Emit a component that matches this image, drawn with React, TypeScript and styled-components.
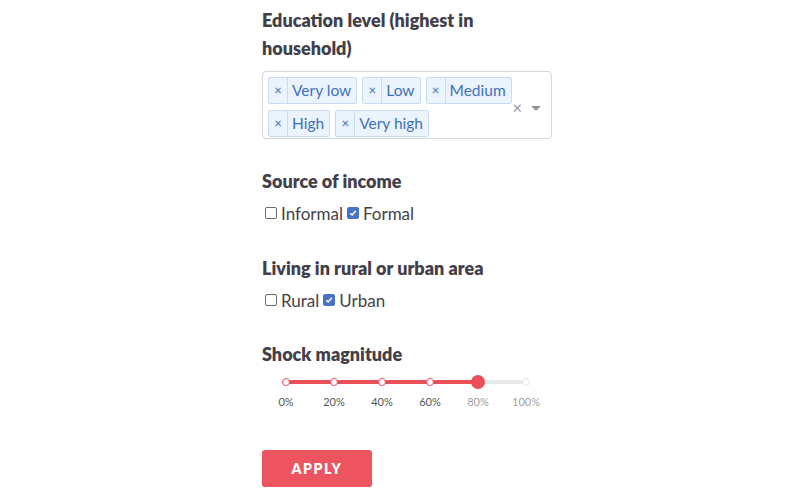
import React from "react";
import styled, { createGlobalStyle } from "styled-components";

const GlobalStyle = createGlobalStyle`
  html, body {
    margin: 0;
    padding: 0;
    background: #ffffff;
    font-family: "Lato", "Noto Sans", sans-serif;
    color: #3e3b44;
  }
`;

const Page = styled.div`
  padding: 6px 0 0 262px;
`;

const Column = styled.div`
  width: 290px;
  display: flex;
  flex-direction: column;
`;

const Heading = styled.h3<{ $top?: number }>`
  margin: ${(p) => p.$top ?? 0}px 0 0;
  font-size: 18px;
  line-height: 28px;
  font-weight: 800;
  color: #433f4a;
`;

const Select = styled.div`
  margin-top: 9px;
  border: 1px solid #d4d6da;
  border-radius: 4px;
  padding: 5px 0 1px 5px;
  display: flex;
  align-items: center;
  box-sizing: border-box;
  min-height: 68px;
`;

const TagArea = styled.div`
  flex: 1;
  display: flex;
  flex-wrap: wrap;
  gap: 6px 5px;
`;

const Tag = styled.div`
  display: flex;
  height: 27px;
  box-sizing: border-box;
  background: #ebf3fc;
  border: 1px solid #c7dcf2;
  border-radius: 2px;
  color: #3f71bb;
  font-size: 15.5px;
  line-height: 25px;
`;

const TagRemove = styled.span`
  width: 18px;
  text-align: center;
  border-right: 1px solid #c7dcf2;
  font-size: 13px;
`;

const TagLabel = styled.span`
  padding: 0 5px 0 4px;
`;

const Indicators = styled.div`
  display: flex;
  align-items: center;
  gap: 9px;
  padding: 0 10px 0 0;
  color: #999;
`;

const ClearX = styled.span`
  font-size: 17px;
  line-height: 1;
`;

const Caret = styled.span`
  width: 0;
  height: 0;
  border-left: 5px solid transparent;
  border-right: 5px solid transparent;
  border-top: 5px solid #999;
  margin-top: 2px;
`;

const CheckRow = styled.div`
  margin-top: 7px;
  display: flex;
  align-items: center;
  height: 22px;
  font-size: 17px;
  color: #45424a;
`;

const CheckItem = styled.label`
  display: flex;
  align-items: center;
  margin-right: 1px;
`;

const Box = styled.span<{ $checked: boolean }>`
  width: 12px;
  height: 12px;
  box-sizing: border-box;
  border-radius: 2px;
  margin: 0 4px 0 3px;
  border: 1px solid ${(p) => (p.$checked ? "#4772c6" : "#6b6b6b")};
  background: ${(p) => (p.$checked ? "#4772c6" : "#fff")};
  display: flex;
  align-items: center;
  justify-content: center;
`;

const SliderWrap = styled.div`
  margin-top: 7px;
  display: flex;
  flex-direction: column;
`;

const TrackArea = styled.div`
  margin-left: 24px;
  width: 240px;
  height: 14px;
  position: relative;
`;

const Rail = styled.div`
  position: absolute;
  left: 0;
  right: 0;
  top: 5px;
  height: 4px;
  border-radius: 2px;
  background: #e9e9e9;
`;

const Fill = styled.div`
  position: absolute;
  left: 0;
  top: 5px;
  height: 4px;
  border-radius: 2px;
  background: #eb4f58;
`;

const Dot = styled.span<{ $active: boolean }>`
  position: absolute;
  top: 3px;
  width: 8px;
  height: 8px;
  margin-left: -4px;
  box-sizing: border-box;
  border-radius: 50%;
  background: #fff;
  border: 1.5px solid ${(p) => (p.$active ? "#eb4f58" : "#e4e4e4")};
`;

const Handle = styled.span`
  position: absolute;
  top: 0;
  width: 14px;
  height: 14px;
  margin-left: -7px;
  border-radius: 50%;
  background: #eb4f58;
`;

const Marks = styled.div`
  margin-top: 6px;
  display: grid;
  grid-template-columns: repeat(6, 48px);
`;

const Mark = styled.span<{ $active: boolean }>`
  text-align: center;
  font-size: 11px;
  line-height: 14px;
  color: ${(p) => (p.$active ? "#555" : "#a0a0a0")};
`;

const ApplyButton = styled.button`
  margin-top: 41px;
  width: 110px;
  height: 37px;
  border: none;
  border-radius: 3px;
  background: #ec545f;
  color: #fff;
  font-family: "Lato", "Noto Sans", sans-serif;
  font-weight: 800;
  font-size: 14px;
  letter-spacing: 1.6px;
  box-shadow: 0 1px 2px rgba(0, 0, 0, 0.15);
  align-self: flex-start;
`;

const levels = ["Very low", "Low", "Medium", "High", "Very high"];
const steps = [0, 20, 40, 60, 80, 100];
const value = 80;

const Check = ({ label, checked }: { label: string; checked: boolean }) => (
  <CheckItem>
    <Box $checked={checked}>
      {checked ? (
        <svg width="8" height="8" viewBox="0 0 8 8">
          <path d="M1.2 4.2 L3.2 6 L6.8 1.8" fill="none" stroke="#fff" strokeWidth="1.5" />
        </svg>
      ) : null}
    </Box>
    {label}
  </CheckItem>
);

const App: React.FC = () => {
  return (
    <Page>
      <GlobalStyle />
      <Column>
        <Heading>Education level (highest in household)</Heading>
        <Select>
          <TagArea>
            {levels.map((l) => (
              <Tag key={l}>
                <TagRemove>×</TagRemove>
                <TagLabel>{l}</TagLabel>
              </Tag>
            ))}
          </TagArea>
          <Indicators>
            <ClearX>×</ClearX>
            <Caret />
          </Indicators>
        </Select>

        <Heading $top={28}>Source of income</Heading>
        <CheckRow>
          <Check label="Informal" checked={false} />
          <Check label="Formal" checked />
        </CheckRow>

        <Heading $top={30}>Living in rural or urban area</Heading>
        <CheckRow>
          <Check label="Rural" checked={false} />
          <Check label="Urban" checked />
        </CheckRow>

        <Heading $top={29}>Shock magnitude</Heading>
        <SliderWrap>
          <TrackArea>
            <Rail />
            <Fill style={{ width: `${value}%` }} />
            {steps.map((s) =>
              s === value ? null : <Dot key={s} $active={s < value} style={{ left: `${s}%` }} />
            )}
            <Handle style={{ left: `${value}%` }} />
          </TrackArea>
          <Marks>
            {steps.map((s) => (
              <Mark key={s} $active={s < value}>
                {s}%
              </Mark>
            ))}
          </Marks>
        </SliderWrap>

        <ApplyButton>APPLY</ApplyButton>
      </Column>
    </Page>
  );
};

export default App;
